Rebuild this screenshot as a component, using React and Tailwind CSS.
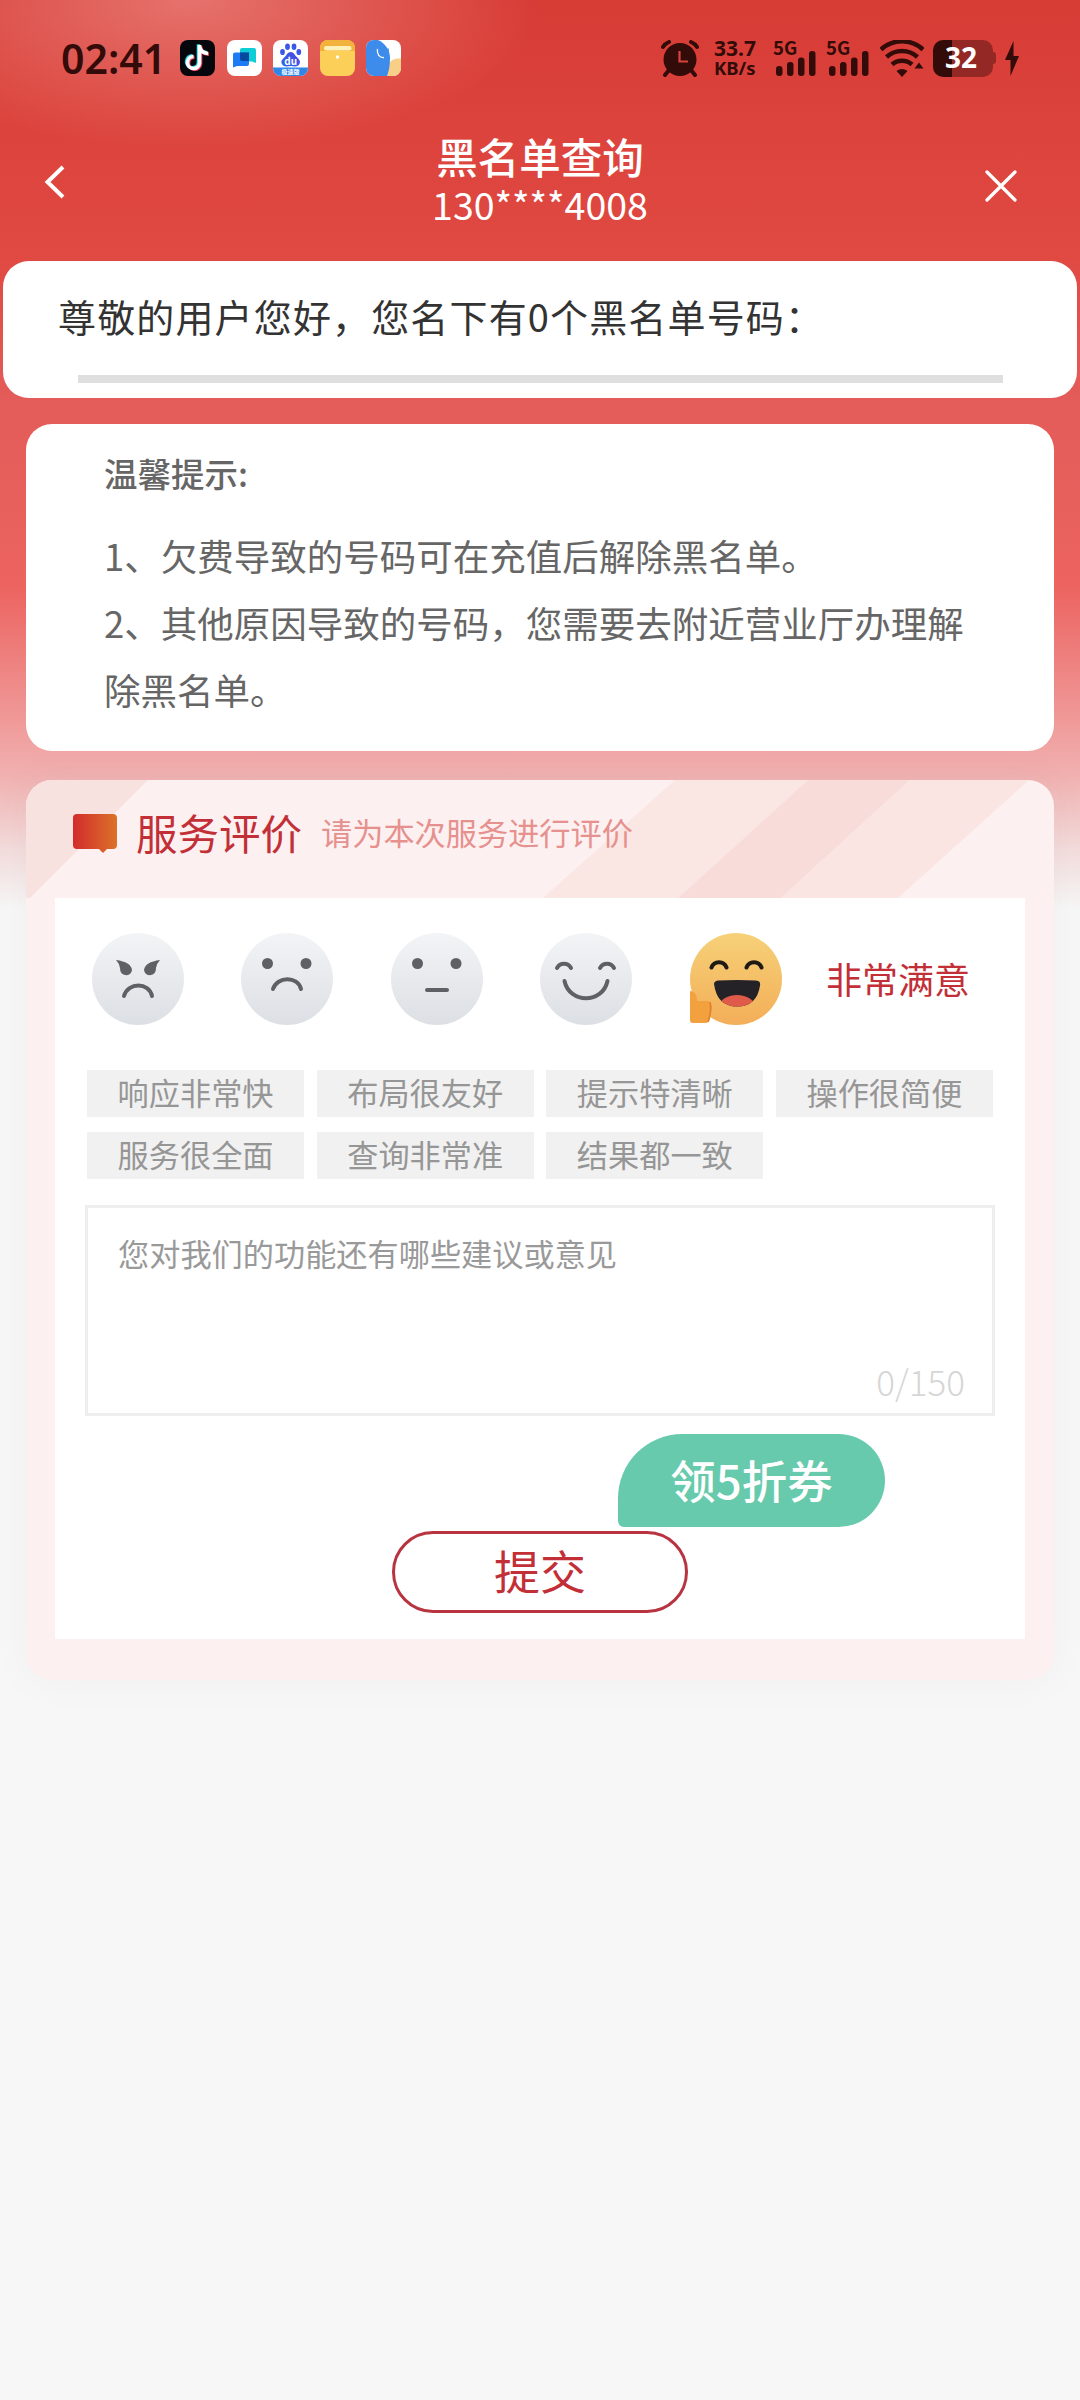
import React, { useState } from "react";

const tags = [
    "响应非常快",
    "布局很友好",
    "提示特清晰",
    "操作很简便",
    "服务很全面",
    "查询非常准",
    "结果都一致",
];

function AppIcons() {
    return (
        <div className="flex gap-[11.5px]">
            <svg width="35" height="36" viewBox="0 0 35 36">
                <rect width="35" height="36" rx="8" fill="#05070d" />
                <g fill="none" strokeWidth="3.600">
                    <path d="M19.5 5v18a6 6 0 1 1-6-6.500M19.5 6c.5 4 3.500 7 8.500 7.500" stroke="#25d9e0" transform="translate(-1 -.8)" />
                    <path d="M19.5 5v18a6 6 0 1 1-6-6.500M19.5 6c.5 4 3.500 7 8.500 7.500" stroke="#f0405e" transform="translate(1 .8)" />
                    <path d="M19.5 5v18a6 6 0 1 1-6-6.500M19.5 6c.5 4 3.500 7 8.500 7.500" stroke="#fff" />
                </g>
            </svg>
            <svg width="35" height="36" viewBox="0 0 35 36">
                <rect width="35" height="36" rx="8" fill="#fff" />
                <path d="M15 8h12a2 2 0 0 1 2 2v13l-4-1.500H15a2 2 0 0 1-2-2V10a2 2 0 0 1 2-2z" fill="#0fcdd6" />
                <path d="M8 12.500h14V24a2 2 0 0 1-2 2H10l-4 1.500v-13a2 2 0 0 1 2-2z" fill="#1c7cf5" />
                <path d="M13 12.500h9V21h-7a2 2 0 0 1-2-2z" fill="#0549a0" />
            </svg>
            <svg width="35" height="36" viewBox="0 0 35 36">
                <defs>
                    <linearGradient id="paw" x1="0" y1="1" x2="1" y2="0">
                        <stop offset="0" stopColor="#2c6bea" />
                        <stop offset="1" stopColor="#4b45e0" />
                    </linearGradient>
                </defs>
                <rect width="35" height="36" rx="8" fill="#fff" />
                <g fill="url(#paw)">
                    <ellipse cx="9.500" cy="12" rx="2.400" ry="3.100" />
                    <ellipse cx="14.500" cy="6.800" rx="2.400" ry="3.300" />
                    <ellipse cx="21" cy="6.800" rx="2.400" ry="3.300" />
                    <ellipse cx="25.800" cy="12" rx="2.400" ry="3.100" />
                    <path d="M17.700 12c3 0 4 3 6 5s4 3.500 3 6.500-4 3.500-9 2.500c-5 1-8 .5-9-2.500s1-4.500 3-6.500 3-5 6-5z" />
                </g>
                <text x="17.700" y="24.500" fontSize="10" fontWeight="700" fill="#fff" textAnchor="middle">du</text>
                <path d="M0 27.500h35v.5a8 8 0 0 1-8 8H8a8 8 0 0 1-8-8z" fill="#2d86e8" />
                <text x="17.500" y="34" fontSize="6" fontWeight="700" fill="#fff" textAnchor="middle">极速版</text>
            </svg>
            <svg width="35" height="36" viewBox="0 0 35 36">
                <rect width="35" height="36" rx="8" fill="#fbcf58" />
                <path d="M8 0h19a8 8 0 0 1 8 8v3H0V8a8 8 0 0 1 8-8z" fill="#f3b23c" />
                <rect x="4" y="6" width="27.500" height="4.500" rx="2" fill="#fff0b8" />
                <circle cx="17.500" cy="17" r="1.700" fill="#fff" />
            </svg>
            <svg width="35" height="36" viewBox="0 0 35 36">
                <defs>
                    <clipPath id="finder">
                        <rect width="35" height="36" rx="8" />
                    </clipPath>
                </defs>
                <g clipPath="url(#finder)">
                    <rect width="35" height="36" fill="#fff" />
                    <path d="M20 36c1-6 1-17 12-17.500h3V36z" fill="#f8cf86" />
                    <path d="M0 0h12c7 3 12 10 12 18 0 7-1 13-3 18H0z" fill="#3d8ceb" />
                    <path d="M11.500 9c-1 5 2 9 6.500 8.500" fill="none" stroke="#fff" strokeWidth="1.300" />
                    <path d="M18 17.500c3-1 5-4 4-9" fill="none" stroke="#3d8ceb" strokeWidth="1.300" />
                </g>
            </svg>
        </div>
    );
}

function Signal() {
    return (
        <div className="flex h-9 w-[43px] flex-col justify-between">
            <span className="h-[14px] text-[18.500px] leading-[14px] font-bold">5G</span>
            <svg className="-mt-[3px] ml-[3px]" width="40" height="25" viewBox="0 0 40 25" fill="currentColor">
                <rect y="15" width="6.500" height="10" rx="3" />
                <rect x="11" y="11" width="6.500" height="14" rx="3" />
                <rect x="22" y="6.500" width="6.500" height="18.500" rx="3" />
                <rect x="33" width="6.500" height="25" rx="3" />
            </svg>
        </div>
    );
}

function StatusBar() {
    return (
        <div className="flex h-[116px] items-center pl-[61px] text-[#330b09]">
            <span className="w-[119px] font-['Noto_Sans'] text-[41px] leading-none font-semibold whitespace-nowrap">
                02:41
            </span>
            <AppIcons />
            <div className="ml-[260px] flex h-9 items-center">
                <svg width="38" height="37" viewBox="0 0 38 37">
                    <g stroke="currentColor" strokeWidth="4" strokeLinecap="round" fill="none">
                        <path d="M2 7Q4 3.500 8 2M36 7Q34 3.500 30 2M8 30l-4 5M30 30l4 5" />
                    </g>
                    <circle cx="19" cy="19.500" r="16.500" fill="currentColor" />
                    <path d="M18.500 11v10.500H27" fill="none" stroke="#d8433c" strokeWidth="2.200" />
                </svg>
                <div className="ml-[15px] flex h-9 w-[45px] flex-col justify-between font-['Noto_Sans'] font-bold">
                    <span className="text-[21px] leading-[16px]">33.7</span>
                    <span className="text-[18.500px] leading-[17px]">KB/s</span>
                </div>
                <div className="ml-[14px] flex gap-[10px]">
                    <Signal />
                    <Signal />
                </div>
                <svg className="ml-[11px]" width="44" height="37" viewBox="0 0 44 37">
                    <g fill="none" stroke="currentColor" strokeWidth="4.500">
                        <path d="M1 9.500a31 31 0 0 1 42 0" />
                        <path d="M6.500 17a23 23 0 0 1 31 0" />
                        <path d="M12 24.500a15 15 0 0 1 20 0" />
                    </g>
                    <path d="M16.500 31q5.500-4 11 0L22 37z" fill="currentColor" />
                    <path d="M39 22.500l4.500 6h-9z" fill="currentColor" />
                </svg>
                <div className="ml-[9px] flex items-center">
                    <div className="flex h-[37px] w-[60px] items-center justify-center rounded-[10px] bg-linear-to-r from-[#330b09] from-32% to-[#942825] to-32% pr-1 pb-[2px] font-['Noto_Sans'] text-[28px] leading-none font-bold text-white">
                        32
                    </div>
                    <div className="h-3 w-[3px] rounded-r-sm bg-[#942825]" />
                </div>
                <svg className="ml-[9px]" width="15" height="35" viewBox="0 0 15 35" fill="currentColor">
                    <path d="M8.500 0L0 19h5.500v16L14 15H8.500z" />
                </svg>
            </div>
        </div>
    );
}

function Header() {
    return (
        <div className="grid h-[145px] grid-cols-3 items-start px-[44px] text-white">
            <svg className="mt-[49px]" width="22" height="34" viewBox="0 0 22 34">
                <path d="M19 2L3.500 17 19 32" fill="none" stroke="currentColor" strokeWidth="4" />
            </svg>
            <div className="flex flex-col items-center pt-[15px]">
                <h1 className="text-[41.500px] leading-[50px] font-medium">黑名单查询</h1>
                <p className="mt-[3px] text-[37.500px] leading-10 whitespace-nowrap">130****4008</p>
            </div>
            <svg className="mt-[54px] mr-[19px] justify-self-end" width="32" height="32" viewBox="0 0 32 32">
                <path d="M2 2l28 28M30 2L2 30" stroke="currentColor" strokeWidth="3.200" strokeLinecap="round" />
            </svg>
        </div>
    );
}

function GreyFace({ children }) {
    return (
        <svg width="92" height="92" viewBox="0 0 92 92">
            <defs>
                <linearGradient id="grey" x1="0" y1="0" x2="0" y2="1">
                    <stop offset="0" stopColor="#f3f4f6" />
                    <stop offset="1" stopColor="#dcdfe4" />
                </linearGradient>
            </defs>
            <circle cx="46" cy="46" r="46" fill="url(#grey)" />
            <g fill="none" stroke="#5f6066" strokeWidth="4" strokeLinecap="round">
                {children}
            </g>
        </svg>
    );
}

function HappyFace() {
    return (
        <svg width="92" height="92" viewBox="0 0 92 92">
            <defs>
                <linearGradient id="gold" x1="0" y1="0" x2="0" y2="1">
                    <stop offset="0" stopColor="#f6d178" />
                    <stop offset="1" stopColor="#f3ae58" />
                </linearGradient>
                <clipPath id="mouth">
                    <path d="M24 51q0-3 4-3.500 19-1 38 0 5 .5 4 5-3 21-23 21T24 51z" />
                </clipPath>
            </defs>
            <circle cx="46" cy="46" r="46" fill="url(#gold)" />
            <path d="M21.500 34.500a8 8 0 0 1 15 0M56.500 34.500a8 8 0 0 1 15 0" fill="none" stroke="#1f1a14" strokeWidth="4" strokeLinecap="round" />
            <g clipPath="url(#mouth)">
                <rect x="20" y="46" width="54" height="32" fill="#252227" />
                <ellipse cx="47" cy="74" rx="18" ry="12" fill="#e05a49" />
            </g>
            <path d="M0 58q7 0 7 10h11q4 1 4 8l-2 10q-1 4-5 4H3q-3 0-3-3z" fill="#f3a03f" />
            <path d="M20 69q2 8-2 20" fill="none" stroke="#e27f2d" strokeWidth="1.500" />
        </svg>
    );
}

function Faces() {
    return (
        <div className="flex items-center gap-[57.400px] pl-[37px]">
            <GreyFace>
                <path d="M24 27q15 2 16 10-1 6-7 5-5-1-5-7-1-5-4-8zM68 27q-15 2-16 10 1 6 7 5 5-1 5-7 1-5 4-8z" fill="#5f6066" stroke="none" />
                <path d="M32 63c4-14 25-14 28 0" />
            </GreyFace>
            <GreyFace>
                <path d="M26.500 30.500h.01M65 30.500h.01" strokeWidth="11" />
                <path d="M32 56c4-13 25-13 28 0" />
            </GreyFace>
            <GreyFace>
                <path d="M26.500 30.500h.01M65 30.500h.01" strokeWidth="11" />
                <path d="M36 57h20" />
            </GreyFace>
            <GreyFace>
                <path d="M17 35a8 8 0 0 1 14 0M60 35a8 8 0 0 1 14 0M24.500 48c5 23 38 23 43 0" />
            </GreyFace>
            <HappyFace />
            <span className="-mt-[3px] -ml-[13px] text-[36px] leading-none text-[#c22f37]">非常满意</span>
        </div>
    );
}

function Evaluation() {
    const [comment, setComment] = useState("");

    return (
        <section className="mx-[26px] mt-[29px] h-[900px] overflow-hidden rounded-[26px] bg-[#fdf0f0] shadow-[0_0_36px_rgba(120,120,120,0.06)]">
            <div className="relative h-[118px]">
                {/* diagonal stripes behind the title */}
                <svg className="absolute inset-0" width="1028" height="118" viewBox="0 0 1028 118">
                    <path d="M0 0h122L4 118H0z" fill="#f8e2df" />
                    <path d="M649 0h133L652 118H517z" fill="#fae6e3" />
                    <path d="M782 0h102L755 118H652z" fill="#f8dcda" />
                    <path d="M884 0h119L872 118H755z" fill="#fae5e2" />
                </svg>
                <div className="relative flex items-start pt-[24px] pl-[47px]">
                    <svg className="mt-[10px]" width="44" height="40" viewBox="0 0 44 40">
                        <defs>
                            <linearGradient id="bubble">
                                <stop offset="0" stopColor="#d32b2c" />
                                <stop offset="1" stopColor="#db7229" />
                            </linearGradient>
                        </defs>
                        <path d="M4 0h36q4 0 4 4v27q0 4-4 4h-6l-4 4-4-4H4q-4 0-4-4V4q0-4 4-4z" fill="url(#bubble)" />
                    </svg>
                    <h2 className="ml-[19px] text-[41.500px] leading-[56px] text-[#c22f37]">服务评价</h2>
                    <span className="ml-[19px] text-[31.200px] leading-[56px] text-[#e6918e]">请为本次服务进行评价</span>
                </div>
            </div>
            <div className="mx-[29px] h-[741px] bg-white px-[30px] pt-[35px]">
                <div className="-mx-[30px]">
                    <Faces />
                </div>
                <div className="mx-[2px] mt-[45px] grid grid-cols-4 gap-x-[12.500px] gap-y-[15px]">
                    {tags.map((tag) => (
                        <button key={tag} className="h-[47px] bg-[#f1f1f1] pb-[4px] text-[31.200px] leading-[43px] whitespace-nowrap text-[#969696]">
                            {tag}
                        </button>
                    ))}
                </div>
                <div className="mt-[26px] flex h-[211px] flex-col border-[3px] border-[#eee] pt-[23px] pr-[27px] pl-[30px]">
                    <textarea
                        className="h-[125px] shrink-0 resize-none text-[31.200px] leading-[44px] text-[#333] outline-none placeholder:text-[#999]"
                        placeholder="您对我们的功能还有哪些建议或意见"
                        value={comment}
                        onChange={(e) => setComment(e.target.value)}
                    />
                    <span className="text-right text-[35px] leading-[50px] font-light text-[#d6d6d6]">{comment.length}/150</span>
                </div>
                <div className="mt-[18px] ml-[533px] flex h-[93px] w-[267px] items-center justify-center rounded-[47px] rounded-tl-[65px] rounded-bl-[6px] bg-[#67caac] pb-[2px] text-[45.500px] font-medium text-white">
                    领5折券
                </div>
                <button className="mx-auto mt-1 block h-[82px] w-[296px] rounded-full border-[3px] border-[#b83440] pb-[6px] text-[46px] leading-[70px] text-[#c22f37]">
                    提交
                </button>
            </div>
        </section>
    );
}

export default function App() {
    return (
        <div className="min-h-[2400px] w-[1080px] overflow-hidden bg-[#f7f7f7] bg-[radial-gradient(ellipse_350px_150px_at_190px_0px,rgba(240,150,145,0.6),transparent),linear-gradient(180deg,#d73c35_0px,#e04a43_260px,#e35c59_400px,#ec635f_585px,#ee8583_670px,#f1b0b0_775px,#f3dcdc_850px,#f7f7f7_910px)] font-['Noto_Sans_CJK_SC',sans-serif]">
            <StatusBar />
            <Header />
            <section className="mx-[3px] h-[137px] rounded-[26px] bg-white pt-[27px] pl-[55px]">
                <p className="text-[38px] leading-[56px] tracking-[1.150px] text-[#333]">
                    尊敬的用户您好，您名下有0个黑名单号码：
                </p>
                <div className="mt-[31px] ml-[20px] h-2 w-[925px] bg-[#dfdfdf]" />
            </section>
            <section className="mx-[26px] mt-[26px] h-[327px] rounded-[26px] bg-white pt-[24px] pr-[70px] pl-[78px] text-[#666]">
                <h3 className="text-[33.500px] leading-[50px] font-medium">温馨提示:</h3>
                <div className="mt-[24px] text-[36.500px] leading-[67px]">
                    <p>1、欠费导致的号码可在充值后解除黑名单。</p>
                    <p>2、其他原因导致的号码，您需要去附近营业厅办理解除黑名单。</p>
                </div>
            </section>
            <Evaluation />
        </div>
    );
}
